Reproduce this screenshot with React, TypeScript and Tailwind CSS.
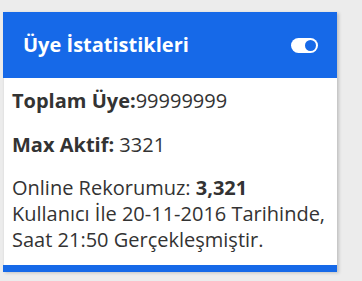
export default function App() {
  return (
    <div className="min-h-screen bg-[#ececec] pt-[12px] pl-[3px]" style={{ height: 281 }}>
      <div className="w-[334px] bg-white shadow-[2px_1px_3px_rgba(0,0,0,0.18)] font-['Open_Sans',sans-serif] text-[#333]">
        {/* Header */}
        <div className="h-[66px] bg-[#1669e8] flex items-center justify-between pl-[20px] pr-[19px]">
          <h3 className="text-[20px] font-bold text-white">Üye İstatistikleri</h3>
          <div className="w-[27px] h-[15px] rounded-full bg-white flex items-center justify-end pr-[2px]">
            <span className="w-[11px] h-[11px] rounded-full bg-[#1669e8]" />
          </div>
        </div>

        {/* Body */}
        <div className="px-[8px] pt-[10px] pb-[12px] text-[20px] leading-[26px] border-l border-[#e4e4e4]">
          <p>
            <b>Toplam Üye:</b>99999999
          </p>
          <p className="mt-[18px]">
            <b>Max Aktif:</b> 3321
          </p>
          <p className="mt-[17px]">
            Online Rekorumuz: <b>3,321</b> Kullanıcı İle 20-11-2016 Tarihinde, Saat 21:50 Gerçekleşmiştir.
          </p>
        </div>
        <div className="h-[7px] bg-[#1669e8]" />
      </div>
    </div>
  );
}
